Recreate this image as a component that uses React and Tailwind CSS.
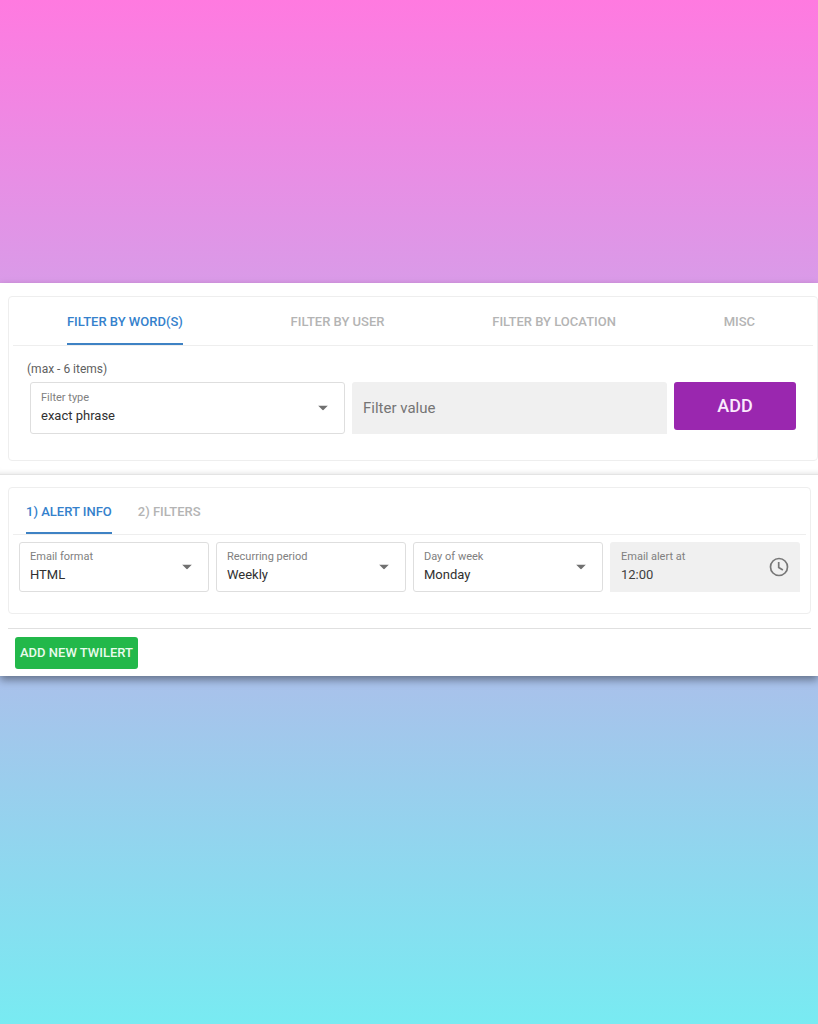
import { useState } from 'react'
import clsx from 'clsx'

const filterTabs = ['Filter by word(s)', 'Filter by user', 'Filter by location', 'Misc']
const alertTabs = ['1) Alert info', '2) Filters']

function Tab({ label, active, onClick }) {
  return (
    <button
      type="button"
      role="tab"
      aria-selected={active}
      onClick={onClick}
      className={clsx(
        'h-full border-b-2 pt-1 text-[13px] font-medium uppercase',
        active ? 'border-[#3e82c4] text-[#3581cc]' : 'border-transparent text-[#b4b4b4]'
      )}
    >
      {label}
    </button>
  )
}

function SelectField({ id, label, options, className }) {
  return (
    <div className={clsx('relative flex flex-col justify-center rounded-[3px] border border-[#dedede] bg-white pb-[2px]', className)}>
      <label htmlFor={id} className="px-[10px] text-[11px] leading-[18px] text-[#808080]">{label}</label>
      <select id={id} className="w-full appearance-none bg-transparent px-[10px] text-[13px] leading-[18px] text-[#303030] outline-none">
        {options.map((option) => (
          <option key={option}>{option}</option>
        ))}
      </select>
      <svg viewBox="0 0 10 5" className="pointer-events-none absolute right-4 top-1/2 h-[5px] w-[10px] -translate-y-1/2 fill-[#707070]">
        <path d="M0 0h10L5 5z" />
      </svg>
    </div>
  )
}

export default function App() {
  const [filterTab, setFilterTab] = useState(0)
  const [alertTab, setAlertTab] = useState(0)

  return (
    <div className="min-h-screen bg-[linear-gradient(to_bottom,#ff7ae0_0%,#d99be8_28%,#a8c2eb_67%,#78ebf2_100%)] pt-[283px] font-[Roboto,sans-serif]">
      <main className="bg-white shadow-[0_4px_8px_rgba(0,0,0,0.4)]">
        {/* Filter builder */}
        <section className="border-b border-[#e4e4e4] pb-[13px] pl-2 pt-[13px] shadow-[inset_0_-5px_5px_-4px_rgba(0,0,0,0.1)]">
          <div className="rounded border border-[#eeeeee] pb-[26px]">
            <div role="tablist" className="mx-1 flex h-[49px] justify-around border-b border-[#eeeeee] pr-1">
              {filterTabs.map((tab, i) => (
                <Tab key={tab} label={tab} active={i === filterTab} onClick={() => setFilterTab(i)} />
              ))}
            </div>
            <p className="px-[18px] pb-1 pt-[14px] text-xs leading-[18px] text-[#606060]">(max - 6 items)</p>
            <div className="grid grid-cols-[1fr_1fr_122px] items-start gap-[7px] px-[21px]">
              <SelectField id="filter-type" label="Filter type" options={['exact phrase', 'any of the words']} className="h-[52px]" />
              <input
                type="text"
                aria-label="Filter value"
                placeholder="Filter value"
                className="h-[52px] w-full min-w-0 rounded-t-[3px] bg-[#f0f0f0] px-[11px] text-[15px] text-[#303030] outline-none placeholder:text-[#757575]"
              />
              <button type="button" className="h-12 rounded-[3px] bg-[#9a27af] text-lg font-medium text-[#fbeafd]">ADD</button>
            </div>
          </div>
        </section>

        {/* Alert settings */}
        <section className="px-[7px] pt-3">
          <div className="ml-px rounded border border-[#eeeeee] pb-[21px]">
            <div role="tablist" className="mx-1 flex h-[47px] gap-[26px] border-b border-[#eeeeee] px-[13px]">
              {alertTabs.map((tab, i) => (
                <Tab key={tab} label={tab} active={i === alertTab} onClick={() => setAlertTab(i)} />
              ))}
            </div>
            <div className="grid grid-cols-4 gap-[7px] px-[10px] pt-[7px]">
              <SelectField id="email-format" label="Email format" options={['HTML', 'Text']} className="h-[50px]" />
              <SelectField id="period" label="Recurring period" options={['Weekly', 'Daily']} className="h-[50px]" />
              <SelectField id="day" label="Day of week" options={['Monday', 'Tuesday', 'Wednesday', 'Thursday', 'Friday']} className="h-[50px]" />
              <div className="flex h-[50px] items-center rounded-t-[3px] bg-[#f0f0f0] px-[11px]">
                <div className="flex min-w-0 flex-1 flex-col pb-[2px]">
                  <label htmlFor="alert-time" className="text-[11px] leading-[18px] text-[#808080]">Email alert at</label>
                  <input id="alert-time" type="text" defaultValue="12:00" className="w-full bg-transparent text-[13px] leading-[18px] text-[#404040] outline-none" />
                </div>
                <svg viewBox="0 0 20 20" className="h-5 w-5 fill-none stroke-[#777777] stroke-[1.7]">
                  <circle cx="10" cy="10" r="8.5" />
                  <path d="M9.7 5v5.4l4.2 2.5" />
                </svg>
              </div>
            </div>
          </div>
          <hr className="ml-px mt-[14px] border-[#e0e0e0]" />
        </section>

        <div className="px-[15px] pb-[7px] pt-2">
          <button type="button" className="h-8 rounded-[3px] bg-[#22b84a] px-[5px] text-[13px] font-medium text-[#e9fbed]">ADD NEW TWILERT</button>
        </div>
      </main>
    </div>
  )
}
